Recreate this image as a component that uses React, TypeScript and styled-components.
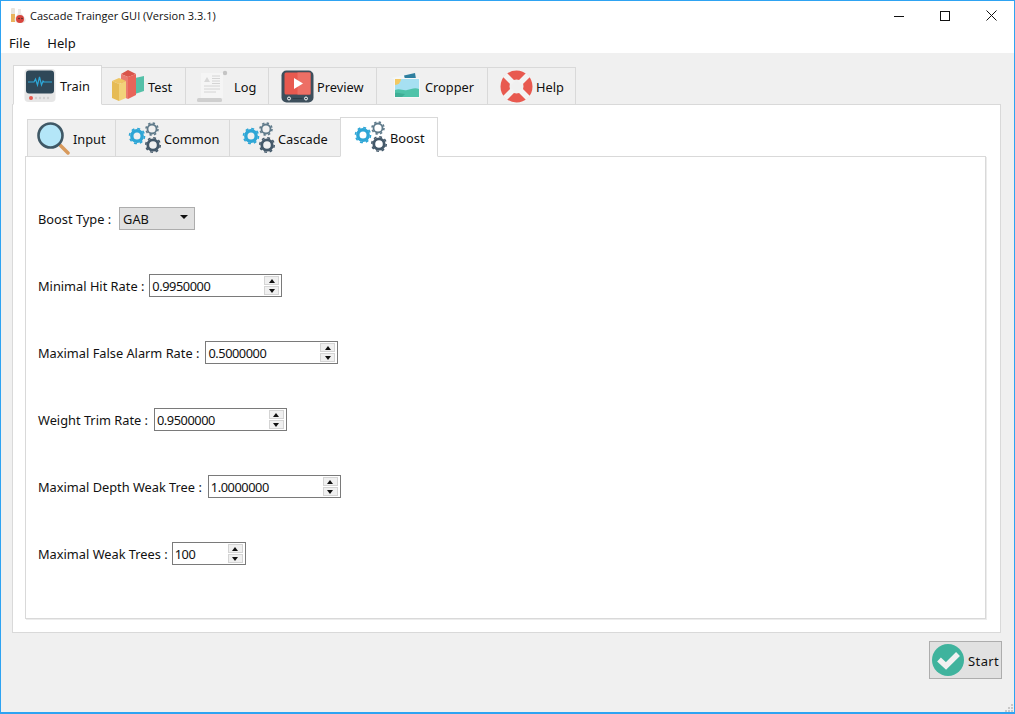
import styled, { createGlobalStyle } from "styled-components";

const GlobalStyle = createGlobalStyle`
  html, body {
    margin: 0;
    padding: 0;
    background: #f0f0f0;
  }
  * {
    box-sizing: border-box;
  }
`;

const Window = styled.div`
  width: 1015px;
  height: 714px;
  border: 1px solid #2ea3f2;
  border-bottom-width: 2px;
  background: #f0f0f0;
  display: flex;
  flex-direction: column;
  font-family: "Noto Sans", "Open Sans", sans-serif;
  color: #111;
  overflow: hidden;
  position: relative;
`;

const TitleBar = styled.div`
  height: 29px;
  background: #fff;
  display: flex;
  align-items: center;
  padding-left: 8px;
  flex-shrink: 0;
`;

const TitleText = styled.span`
  font-family: "Open Sans", sans-serif;
  font-size: 11px;
  margin-left: 4px;
  flex: 1;
  color: #111;
`;

const WinButton = styled.div`
  width: 46px;
  height: 29px;
  display: flex;
  align-items: center;
  justify-content: center;
`;

const MenuBar = styled.div`
  height: 23px;
  background: #fff;
  display: flex;
  align-items: center;
  gap: 17px;
  padding: 3px 0 0 8px;
  font-size: 13px;
  letter-spacing: 0.1px;
  flex-shrink: 0;
`;

const Body = styled.div`
  flex: 1;
  display: flex;
  flex-direction: column;
  padding: 12px 13px 0 11px;
`;

const TabBar = styled.div<{ $inset: number }>`
  display: flex;
  align-items: flex-end;
  padding-left: ${(p) => p.$inset}px;
  position: relative;
  z-index: 1;
  margin-bottom: -1px;
`;

const Tab = styled.div<{ $active?: boolean; $width: number; $height: number; $gap: number; $pad: number }>`
  width: ${(p) => p.$width}px;
  height: ${(p) => (p.$active ? p.$height + 2 : p.$height)}px;
  display: flex;
  align-items: center;
  gap: ${(p) => p.$gap}px;
  padding-left: ${(p) => p.$pad}px;
  font-size: 12.8px;
  background: ${(p) => (p.$active ? "#fff" : "#f0f0f0")};
  border: 1px solid #d9d9d9;
  border-left-width: ${(p) => (p.$active ? 1 : 0)}px;
  border-bottom-color: ${(p) => (p.$active ? "#fff" : "#d9d9d9")};
  margin-left: ${(p) => (p.$active ? -1 : 0)}px;
  &:first-child {
    margin-left: 0;
    border-left-width: 1px;
  }
`;

const TabLabel = styled.span`
  padding-top: 2px;
`;

const OuterPane = styled.div`
  width: 989px;
  height: 529px;
  background: #fff;
  border: 1px solid #d9d9d9;
  padding: 12px 14px 13px 12px;
  display: flex;
  flex-direction: column;
`;

const InnerPane = styled.div`
  flex: 1;
  background: #fff;
  border: 1px solid #d9d9d9;
  box-shadow: 1px 1px 0 #ececec;
  padding: 50px 0 0 12px;
  display: flex;
  flex-direction: column;
  gap: 44px;
`;

const FormRow = styled.div<{ $gap: number }>`
  height: 23px;
  display: flex;
  align-items: center;
  gap: ${(p) => p.$gap}px;
  font-size: 12.8px;
`;

const Combo = styled.div`
  width: 76px;
  height: 23px;
  background: #e1e1e1;
  border: 1px solid #adadad;
  display: flex;
  align-items: center;
  justify-content: space-between;
  padding: 0 6px 0 3px;
`;

const Caret = styled.div`
  width: 0;
  height: 0;
  border-left: 4px solid transparent;
  border-right: 4px solid transparent;
  border-top: 4px solid #111;
  margin-bottom: 3px;
`;

const Spin = styled.div<{ $width: number }>`
  width: ${(p) => p.$width}px;
  height: 23px;
  background: #fff;
  border: 1px solid #7a7a7a;
  display: flex;
  align-items: center;
  justify-content: space-between;
  padding: 0 2px 0 2px;
  letter-spacing: -0.45px;
`;

const SpinButtons = styled.div`
  width: 15px;
  height: 19px;
  display: flex;
  flex-direction: column;
  gap: 1px;
`;

const SpinButton = styled.div`
  flex: 1;
  background: #f0f0f0;
  border: 1px solid #d4d4d4;
  display: flex;
  align-items: center;
  justify-content: center;
`;

const ArrowUp = styled.div`
  width: 0;
  height: 0;
  border-left: 3px solid transparent;
  border-right: 3px solid transparent;
  border-bottom: 4px solid #111;
`;

const ArrowDown = styled(ArrowUp)`
  border-bottom: 0;
  border-top: 4px solid #111;
`;

const Footer = styled.div`
  display: flex;
  justify-content: flex-end;
  padding-top: 8px;
  margin-right: -1px;
`;

const StartButton = styled.div`
  width: 73px;
  height: 38px;
  background: #e1e1e1;
  border: 1px solid #adadad;
  display: flex;
  align-items: center;
  gap: 4px;
  padding-left: 2px;
  font-size: 13px;
  letter-spacing: 0.4px;
`;

const StartLabel = styled.span`
  padding-top: 2px;
`;

const Grip = styled.svg`
  position: absolute;
  right: 1px;
  bottom: 0;
`;

function AppIcon() {
  return (
    <svg width="17" height="17" viewBox="0 0 17 17">
      <rect x="2" y="1" width="4" height="14" rx="1" fill="#e8e4dc" />
      <rect x="2" y="7" width="4" height="8" fill="#eab35c" />
      <path d="M9 2h3v4l4 5a3 3 0 0 1-2 5H9a3.500 3.500 0 0 1-3-5l3-5z" fill="#ece8e6" />
      <circle cx="11" cy="12" r="4" fill="#d9453d" />
      <circle cx="10" cy="11.500" r="0.800" fill="#3a2b2b" />
      <circle cx="13" cy="11.500" r="0.800" fill="#3a2b2b" />
    </svg>
  );
}

function MonitorIcon() {
  return (
    <svg width="33" height="33" viewBox="0 0 33 33">
      <rect x="0.500" y="0" width="31" height="33" rx="4" fill="#e6e6e6" />
      <rect x="2" y="1.500" width="28" height="23" rx="3" fill="#2f4858" />
      <path d="M4 13h6l1.500-3 2 6 2-8 2 8 1.500-4 1 1h8" fill="none" stroke="#2ea8d8" strokeWidth="1.200" />
      <circle cx="7" cy="29" r="2" fill="#e8594f" />
      <circle cx="12" cy="29" r="1.200" fill="#cfcfcf" />
      <circle cx="16" cy="29" r="1.200" fill="#cfcfcf" />
      <circle cx="20" cy="29" r="1.200" fill="#cfcfcf" />
      <circle cx="24" cy="29" r="1.200" fill="#cfcfcf" />
    </svg>
  );
}

function BarsIcon() {
  return (
    <svg width="33" height="33" viewBox="0 0 33 33">
      <path d="M23 8l9-2v15l-9 3z" fill="#55c0a8" />
      <path d="M9 4l7-4 8 4-8 3z" fill="#d9544a" />
      <path d="M9 4l7 3v22l-7-3z" fill="#ea7b70" />
      <path d="M16 7l8-3v21l-8 4z" fill="#e8655a" />
      <path d="M0 11l7-3 7 3-7 3z" fill="#eec563" />
      <path d="M0 11l7 3v17l-7-3z" fill="#e6bb55" />
      <path d="M7 14l7-3v17l-7 3z" fill="#f2d27a" />
    </svg>
  );
}

function LogIcon() {
  return (
    <svg width="33" height="33" viewBox="0 0 33 33">
      <circle cx="28" cy="3" r="2.200" fill="#c4c4c4" />
      <rect x="4" y="3" width="22" height="25" fill="#f5f5f5" />
      <path d="M7 12l3-5 3 5z" fill="#d8d8d8" />
      <path d="M15 6h8M15 8.500h8M15 11h8M15 13.500h8M7 16h16M7 19h16M7 22h12" stroke="#d4d4d4" strokeWidth="1" />
      <rect x="0" y="28" width="25" height="4" rx="1.500" fill="#cfcfcf" />
    </svg>
  );
}

function PlayerIcon() {
  return (
    <svg width="33" height="33" viewBox="0 0 33 33">
      <rect x="0.500" y="0.500" width="32" height="32" rx="5" fill="#3d4f5c" />
      <rect x="3.500" y="2.500" width="26" height="22" rx="1.500" fill="#e8594f" />
      <rect x="16.500" y="2.500" width="13" height="22" fill="#ed6f65" />
      <path d="M13 8l9 5.500-9 5.500z" fill="#fff" />
      <circle cx="8" cy="28.500" r="1.500" fill="none" stroke="#fff" />
      <circle cx="25" cy="28.500" r="1.500" fill="none" stroke="#fff" />
      <rect x="11.500" y="28" width="10" height="1" fill="#2d3b46" />
    </svg>
  );
}

function PhotoIcon() {
  return (
    <svg width="33" height="33" viewBox="0 0 33 33">
      <path d="M1 8l24-5 1 6H3z" fill="#f2f7f8" />
      <path d="M14 5.500l11-2.500 1 6H15z" fill="#2f7f9f" />
      <rect x="4" y="8" width="26" height="20" fill="#f7f7f7" />
      <rect x="5" y="9" width="24" height="18" fill="#a6e0f2" />
      <path d="M5 9h6a6 6 0 0 1-6 6z" fill="#f3c862" />
      <path d="M5 20c5-2 8 1 12 0s8-3 12-1v8H5z" fill="#4fc3a9" />
      <path d="M5 23c4-1 7 1 10 1l-3 3H5z" fill="#3fae96" />
    </svg>
  );
}

function BuoyIcon() {
  return (
    <svg width="33" height="33" viewBox="0 0 33 33">
      <circle cx="16.500" cy="16.500" r="11.500" fill="none" stroke="#e8594f" strokeWidth="9" />
      <path d="M5 5l8 8M28 5l-8 8M5 28l8-8M28 28l-8-8" stroke="#f3f3f3" strokeWidth="5.500" />
    </svg>
  );
}

function MagnifierIcon() {
  return (
    <svg width="33" height="33" viewBox="0 0 33 33">
      <path d="M22 22l9 9" stroke="#d89a5c" strokeWidth="3.500" strokeLinecap="round" />
      <circle cx="13.500" cy="13.500" r="12" fill="#b4e6f8" stroke="#3f5866" strokeWidth="2.600" />
    </svg>
  );
}

function Cog({ cx, cy, r, w, color }: { cx: number; cy: number; r: number; w: number; color: string }) {
  const outer = r + w / 2 + 0.6;
  const circumference = 2 * Math.PI * outer;
  const dash = circumference / 16;
  return (
    <g>
      <circle cx={cx} cy={cy} r={r} fill="none" stroke={color} strokeWidth={w} />
      <circle cx={cx} cy={cy} r={outer} fill="none" stroke={color} strokeWidth="1.600" strokeDasharray={`${dash} ${dash}`} />
    </g>
  );
}

function GearsIcon() {
  return (
    <svg width="33" height="33" viewBox="0 0 33 33">
      <Cog cx={9} cy={14} r={5.200} w={3.400} color="#2ea6d6" />
      <Cog cx={24} cy={7} r={4.500} w={1.800} color="#5f7a8a" />
      <Cog cx={25} cy={23} r={5.200} w={2.800} color="#44596a" />
    </svg>
  );
}

function CheckIcon() {
  return (
    <svg width="32" height="32" viewBox="0 0 32 32">
      <circle cx="16" cy="16" r="16" fill="#3fb39d" />
      <path d="M7 15.500l7 6.500 12-12" fill="none" stroke="#f1f1f1" strokeWidth="5.500" />
    </svg>
  );
}

const outerTabs = [
  { label: "Train", icon: <MonitorIcon />, width: 89, gap: 3, pad: 10, active: true },
  { label: "Test", icon: <BarsIcon />, width: 84, gap: 3, pad: 10 },
  { label: "Log", icon: <LogIcon />, width: 83, gap: 4, pad: 11 },
  { label: "Preview", icon: <PlayerIcon />, width: 108, gap: 3, pad: 12 },
  { label: "Cropper", icon: <PhotoIcon />, width: 111, gap: 2, pad: 13 },
  { label: "Help", icon: <BuoyIcon />, width: 88, gap: 3, pad: 12 },
];

const innerTabs = [
  { label: "Input", icon: <MagnifierIcon />, width: 89, gap: 3, pad: 9 },
  { label: "Common", icon: <GearsIcon />, width: 114, gap: 3, pad: 12 },
  { label: "Cascade", icon: <GearsIcon />, width: 111, gap: 3, pad: 12 },
  { label: "Boost", icon: <GearsIcon />, width: 98, gap: 3, pad: 13, active: true },
];

const spinRows = [
  { label: "Minimal Hit Rate :", value: "0.9950000", width: 133, gap: 5 },
  { label: "Maximal False Alarm Rate :", value: "0.5000000", width: 133, gap: 6 },
  { label: "Weight Trim Rate :", value: "0.9500000", width: 133, gap: 6 },
  { label: "Maximal Depth Weak Tree :", value: "1.0000000", width: 133, gap: 6 },
  { label: "Maximal Weak Trees :", value: "100", width: 74, gap: 4 },
];

export default function App() {
  return (
    <>
      <GlobalStyle />
      <Window>
        <TitleBar>
          <AppIcon />
          <TitleText>Cascade Trainger GUI (Version 3.3.1)</TitleText>
          <WinButton>
            <svg width="10" height="10" viewBox="0 0 10 10">
              <path d="M0 5.500h10" stroke="#111" />
            </svg>
          </WinButton>
          <WinButton>
            <svg width="10" height="10" viewBox="0 0 10 10">
              <rect x="0.500" y="0.500" width="9" height="9" fill="none" stroke="#111" />
            </svg>
          </WinButton>
          <WinButton>
            <svg width="11" height="11" viewBox="0 0 11 11">
              <path d="M0.500 0.500l10 10M10.500 0.500l-10 10" stroke="#111" />
            </svg>
          </WinButton>
        </TitleBar>
        <MenuBar>
          <span>File</span>
          <span>Help</span>
        </MenuBar>
        <Body>
          <TabBar $inset={1}>
            {outerTabs.map((t) => (
              <Tab key={t.label} $active={t.active} $width={t.width} $height={38} $gap={t.gap} $pad={t.pad}>
                {t.icon}
                <TabLabel>{t.label}</TabLabel>
              </Tab>
            ))}
          </TabBar>
          <OuterPane>
            <TabBar $inset={2}>
              {innerTabs.map((t) => (
                <Tab key={t.label} $active={t.active} $width={t.width} $height={38} $gap={t.gap} $pad={t.pad}>
                  {t.icon}
                  <TabLabel>{t.label}</TabLabel>
                </Tab>
              ))}
            </TabBar>
            <InnerPane>
              <FormRow $gap={8}>
                <span>Boost Type :</span>
                <Combo>
                  <span>GAB</span>
                  <Caret />
                </Combo>
              </FormRow>
              {spinRows.map((r) => (
                <FormRow key={r.label} $gap={r.gap}>
                  <span>{r.label}</span>
                  <Spin $width={r.width}>
                    <span>{r.value}</span>
                    <SpinButtons>
                      <SpinButton>
                        <ArrowUp />
                      </SpinButton>
                      <SpinButton>
                        <ArrowDown />
                      </SpinButton>
                    </SpinButtons>
                  </Spin>
                </FormRow>
              ))}
            </InnerPane>
          </OuterPane>
          <Footer>
            <StartButton>
              <CheckIcon />
              <StartLabel>Start</StartLabel>
            </StartButton>
          </Footer>
        </Body>
        <Grip width="8" height="8" viewBox="0 0 8 8">
          <path d="M6 0h2v2H6zM3 3h2v2H3zM6 3h2v2H6zM0 6h2v2H0zM3 6h2v2H3zM6 6h2v2H6z" fill="#c8c8c8" />
        </Grip>
      </Window>
    </>
  );
}
